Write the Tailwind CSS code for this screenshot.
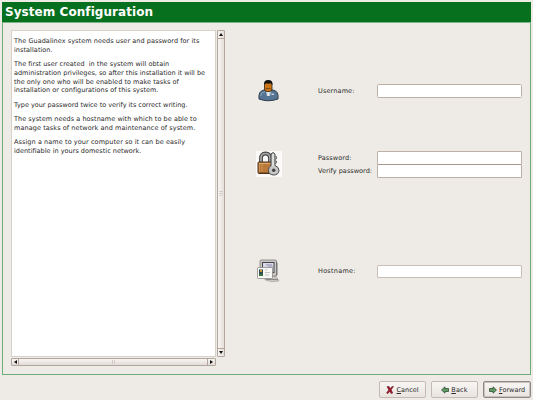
<!DOCTYPE html>
<html lang="en">
<head>
<meta charset="utf-8">
<title>System Configuration</title>
<script src="https://cdn.jsdelivr.net/npm/@tailwindcss/browser@4"></script>
</head>
<body class="w-[533px] h-[400px] overflow-hidden bg-[#eeebe6] text-[#2b2b2b] text-[6.5px] leading-[8.95px] font-['DejaVu_Sans',sans-serif] whitespace-nowrap">
<div class="flex flex-col h-[400px] pt-[2px] pl-[2px] pr-[2px]">
  <main class="flex flex-col h-[373px] border border-t-0 border-[#6cad78]">
    <h1 class="-mx-px h-[20px] shrink-0 bg-[#07701f] pl-[3px] text-white font-bold text-[12px] leading-[20px] tracking-[0.06px]">System Configuration</h1>
    <div class="-mx-px h-px shrink-0 bg-[#7ab686]"></div>
    <div class="flex pl-[8px] pt-[7px]">
      <section class="grid grid-cols-[205px_8px] grid-rows-[327px_8px] gap-x-[1px] gap-y-px">
        <div class="flex flex-col gap-[5.1px] bg-white border border-[#d8d1c9] pl-[2px] pt-[5.6px]">
          <p class="tracking-[0.055px]">The Guadalinex system needs user and password for its<br>installation.</p>
          <p><span class="tracking-[0.03px]">The first user created&nbsp; in the system will obtain</span><br>administration privileges, so after this installation it will be<br><span class="tracking-[0.03px]">the only one who will be enabled to make tasks of<br>installation or configurations of this system.</span></p>
          <p class="tracking-[-0.01px]">Type your password twice to verify its correct writing.</p>
          <p><span class="tracking-[0.05px]">The system needs a hostname with which to be able to</span><br><span class="tracking-[0.08px]">manage tasks of network and maintenance of system.</span></p>
          <p><span class="tracking-[0.08px]">Assign a name to your computer so it can be easily</span><br><span class="tracking-[0.015px]">identifiable in yours domestic network.</span></p>
        </div>
        <div class="flex flex-col border border-[#b3a79d] rounded-[1px] bg-linear-to-r from-[#f7f5f3] to-[#e6e0db]">
          <div class="h-[8px] flex items-center justify-center border-b border-[#b3a79d]"><svg width="4" height="3" viewBox="0 0 4 3"><path d="M0 3L2 0L4 3Z" fill="#111"/></svg></div>
          <div class="flex-1 flex flex-col items-center justify-center gap-[1px]"><i class="w-[4px] h-px bg-[#d2cbc4]"></i><i class="w-[4px] h-px bg-[#d2cbc4]"></i><i class="w-[4px] h-px bg-[#ddd7d1]"></i></div>
          <div class="h-[8px] flex items-center justify-center border-t border-[#b3a79d]"><svg width="4" height="3" viewBox="0 0 4 3"><path d="M0 0L2 3L4 0Z" fill="#111"/></svg></div>
        </div>
        <div class="flex border border-[#b3a79d] rounded-[1px] bg-linear-to-b from-[#f7f5f3] to-[#e2dcd6]">
          <div class="w-[7px] flex items-center justify-center border-r border-[#b3a79d]"><svg width="3" height="4" viewBox="0 0 3 4"><path d="M3 0L0 2L3 4Z" fill="#111"/></svg></div>
          <div class="flex-1 flex items-center justify-center gap-[1px]"><i class="h-[4px] w-px bg-[#d2cbc4]"></i><i class="h-[4px] w-px bg-[#d2cbc4]"></i></div>
          <div class="w-[8px] flex items-center justify-center border-l border-[#b3a79d]"><svg width="3" height="4" viewBox="0 0 3 4"><path d="M0 0L3 2L0 4Z" fill="#111"/></svg></div>
        </div>
      </section>
      <form class="flex flex-col pl-[31px] pt-[50px]">
        <div class="flex items-center h-[21px]">
          <svg class="w-[25px] h-[25px] mr-[37px]" viewBox="0 0 25 25">
            <path d="M3 21Q2 13 8 12H17Q23 13 22 21Q12 24.500 3 21Z" fill="#557493" stroke="#2e3c4b"/>
            <path d="M4.500 18Q5 14 9 13.500" stroke="#86a2bc" fill="none"/>
            <path d="M9.500 12.500L12.500 14L15.500 12.500L14 18H11Z" fill="#b9c7d4"/>
            <path d="M11.500 13.500H13V18H11.500Z" fill="#e9eef2"/><path d="M15.500 15.500H18V17H15.500Z" fill="#c3d0dc"/>
            <rect x="8.500" y="4" width="7.500" height="9.500" rx="2.500" fill="#c87417" stroke="#36210e" stroke-width=".8"/>
            <path d="M8 7Q7.500 2 12.300 2Q17 2 16.500 7L15 5.500H9.500Z" fill="#111"/>
            <path d="M9.800 10.500H14.700" stroke="#88480d"/>
          </svg>
          <label class="w-[59px] pt-[1px] tracking-[0.14px]">Username:</label>
          <input class="w-[145px] h-[14px] bg-white border border-[#bdb0a6] rounded-[1.5px]" type="text">
        </div>
        <div class="flex items-center h-[28px] mt-[49px]">
          <svg class="w-[26px] h-[26px] mr-[36px]" viewBox="0 0 26 26">
            <rect width="26" height="26" fill="#fbfaf8"/>
            <path d="M5 12V7.500Q5 2.500 9.500 2.500T14 7.500V12" fill="none" stroke="#444" stroke-width="3.800"/>
            <path d="M5 12V7.500Q5 2.500 9.500 2.500T14 7.500V12" fill="none" stroke="#aaa" stroke-width="1.700"/>
            <rect x="2" y="11" width="14" height="11.500" rx="1" fill="#b9793a" stroke="#4b321c"/>
            <path d="M3 12.500H15" stroke="#dfac6e"/><path d="M3.500 13V21.500M6 13V21.500" stroke="#d09a5a" stroke-width=".8"/><path d="M3 21.500H15" stroke="#945922"/>
            <path d="M15 3L17 1.500L19 3V14.500Q23 16 23 19.500Q22.500 24 17.500 24Q12.500 23.500 12.500 19.500Q12.500 16 15 14.500Z" fill="#c7c9c9" stroke="#444"/>
            <path d="M17 3V15" stroke="#f1f1f1"/><path d="M19 5.500H20.500V8H19M19 10H20.500V12H19" fill="#aaa" stroke="#555" stroke-width=".7"/>
            <circle cx="17.700" cy="19.300" r="1.800" fill="#444"/>
          </svg>
          <div class="flex flex-col w-[59px] gap-[4px] pt-[1.500px]"><label class="tracking-[0.1px]">Password:</label><label class="tracking-[0.03px]">Verify password:</label></div>
          <div class="flex flex-col">
            <input class="w-[145px] h-[14px] bg-white border border-[#bdb0a6] border-b-[#a4978f] rounded-[1.5px]" type="text">
            <input class="w-[145px] h-[14px] -mt-px bg-white border border-[#bdb0a6] border-t-[#a4978f] rounded-[1.5px]" type="text">
          </div>
        </div>
        <div class="flex items-center h-[28px] mt-[79px]">
          <svg class="w-[26px] h-[26px] mr-[36px]" viewBox="0 0 26 26">
            <path d="M8 18H20L23 23Q16 25 9 22Z" fill="#c8c6c3" stroke="#aaa7a3" stroke-width=".7"/>
            <path d="M10 21.500H22" stroke="#8b8885"/>
            <rect x="4" y="2" width="16.500" height="16" rx="1.200" fill="#c9c8c5" stroke="#817f7b" stroke-width=".8"/>
            <path d="M20 3L21.500 5V17L20 18Z" fill="#777"/>
            <rect x="6.500" y="4.500" width="11.500" height="10" fill="#dadbe7" stroke="#42444a"/>
            <path d="M10 7H16M12 9H17" stroke="#8b88b0"/>
            <rect x="1.500" y="9.500" width="15" height="11" rx=".8" fill="#f7f7f6" stroke="#8c8a88" stroke-width=".8"/>
            <rect x="3" y="11.500" width="4" height="6" fill="#314b55"/><path d="M4 12H6V14H4Z" fill="#d69b30"/><path d="M3 16H7V18H3Z" fill="#36743c"/>
            <path d="M9 12H11M9 14.500H14M9 17H13" stroke="#b9b9b9" stroke-width=".8"/>
          </svg>
          <label class="w-[59px] pt-[1px] tracking-[0.25px]">Hostname:</label>
          <input class="w-[145px] h-[13px] bg-white border border-[#c8beb5] rounded-[1px]" type="text">
        </div>
      </form>
    </div>
  </main>
  <footer class="flex justify-end gap-[5px] pt-[6px]">
    <button class="flex items-center justify-center gap-[2px] w-[47px] h-[17px] border border-[#c4bab2] rounded-[2px] bg-linear-to-b from-[#f8f6f4] to-[#e9e4df]" type="button">
      <svg class="w-[8px] h-[8px]" viewBox="0 0 8 8"><path d="M1 .5L3 .5L4.200 2.500L6 .5H7.500L5.200 3.800L6.800 7L5 7.500L3.800 5.200L2 7.500L.5 7L2.700 3.900Z" fill="#a41528" stroke="#5c1720" stroke-width=".5"/></svg>
      <span class="pt-[1px]"><u>C</u>ancel</span>
    </button>
    <button class="flex items-center justify-center gap-[2px] w-[47px] h-[17px] border border-[#c4bab2] rounded-[2px] bg-linear-to-b from-[#f8f6f4] to-[#e9e4df]" type="button">
      <svg class="w-[8px] h-[8px]" viewBox="0 0 8 8"><path d="M.5 4L4 .8V2.500H7.500V5.500H4V7.200Z" fill="#5b9c61" stroke="#293e2b" stroke-width=".7"/></svg>
      <span class="pt-[1px] tracking-[0.15px]"><u>B</u>ack</span>
    </button>
    <button class="flex items-center justify-center gap-[2px] w-[48px] h-[17px] border border-[#8f8984] rounded-[2px] bg-linear-to-b from-[#f8f6f4] to-[#e9e4df] shadow-[inset_0_0_0_1px_#c9c2bc]" type="button">
      <svg class="w-[8px] h-[8px]" viewBox="0 0 8 8"><path d="M7.500 4L4 .8V2.500H.5V5.500H4V7.200Z" fill="#5b9c61" stroke="#293e2b" stroke-width=".7"/></svg>
      <span class="pt-[1px]"><u>F</u>orward</span>
    </button>
  </footer>
</div>
</body>
</html>
